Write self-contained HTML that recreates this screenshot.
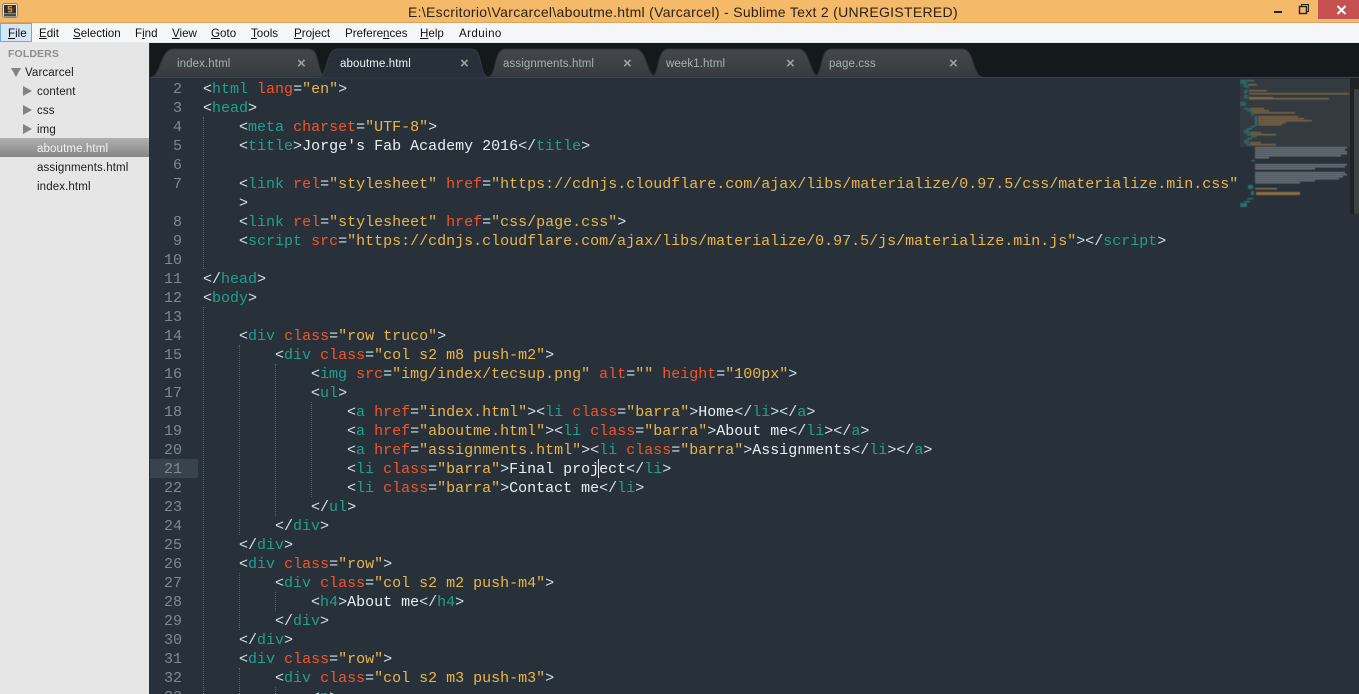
<!DOCTYPE html>
<html lang="en"><head><meta charset="utf-8"><title>Sublime Text</title>
<style>
html,body{margin:0;padding:0;width:1359px;height:694px;overflow:hidden;background:#283139}
body{position:relative;font-family:"Liberation Sans",sans-serif}
.abs{position:absolute;white-space:pre}
#title{position:absolute;left:0;top:0;width:1359px;height:22px;background:#f4b969;border-bottom:1px solid #d9a45c}
#ttext{left:408px;top:3px;font-size:14px;line-height:18px;color:#2a2218;letter-spacing:.3px}
#menu{position:absolute;left:0;top:23px;width:1359px;height:19px;background:#f5f6f7;border-bottom:1px solid #e8e8e8}
#menu span{position:absolute;top:3px;font-size:11.6px;line-height:16px;color:#111;white-space:pre}
#filebox{position:absolute;left:0;top:0;width:30px;height:17px;background:#d5e6f6;border:1px solid #70a9de}
#side{position:absolute;left:0;top:43px;width:149px;height:651px;background:#e6e6e6;border-right:1px solid #2a2f33}
#side .i{position:absolute;font-size:11.5px;line-height:16px;color:#1b1b1b;white-space:pre;letter-spacing:.12px}
#sel{position:absolute;left:0;top:95px;width:149px;height:19px;background:linear-gradient(#b0b0b0,#868686)}
.tri{position:absolute;width:0;height:0;border-top:5px solid transparent;border-bottom:5px solid transparent;border-left:9px solid #838383}
#tabs{position:absolute;left:150px;top:43px;width:1209px;height:35px;background:#14191c}
#ed{position:absolute;left:150px;top:78px;width:1209px;height:616px;background:#283139}
#hl{position:absolute;left:150px;top:459px;width:48px;height:19px;background:#37444c}
#nums{position:absolute;left:150px;top:80px;width:32px;margin:0;font:15px/19px "Liberation Mono",monospace;color:#7e8a8f;text-align:right}
#code{position:absolute;left:203px;top:80px;margin:0;font:15px/19px "Liberation Mono",monospace;letter-spacing:0;color:#e9eff1;height:614px;overflow:hidden}
#code i{font-style:normal;color:#cde2ea}
#code b{font-weight:normal;color:#20a090}
#code u{text-decoration:none;color:#f2552b}
#code s{text-decoration:none;color:#eab64c}
.g{position:absolute;width:0;border-left:1px dotted #566169}
#caret{position:absolute;left:598px;top:459px;width:1px;height:19px;background:#e8eef0}
.tl{position:absolute;font-size:11.5px;line-height:16px;top:56px;white-space:pre;letter-spacing:.1px}
.tx{position:absolute;font-size:15px;line-height:16px;top:56px;font-weight:bold;color:#9ca0a3}
</style></head><body>

<div id="title">
  <svg style="position:absolute;left:2px;top:3px" width="16" height="15" viewBox="0 0 16 15">
    <rect x=".5" y=".5" width="15" height="14" rx="2" fill="#e9e4da" stroke="#8a8378"/>
    <rect x="2" y="2" width="12" height="8.5" fill="#343230"/>
    <rect x="2" y="11" width="12" height="2.5" fill="#4b4945"/>
    <path d="M10 3.6H6.5V6H9.5V8.6H6" fill="none" stroke="#e98a1e" stroke-width="1.4"/>
  </svg>
  <div class="abs" id="ttext">E:\Escritorio\Varcarcel\aboutme.html (Varcarcel) - Sublime Text 2 (UNREGISTERED)</div>
  <div style="position:absolute;left:1274px;top:11px;width:8px;height:2px;background:#222"></div>
  <svg style="position:absolute;left:1298px;top:3px" width="12" height="12" viewBox="0 0 12 12">
    <path d="M3.5 3V1.5H10.5V8.5H8.5" fill="none" stroke="#222" stroke-width="1"/>
    <rect x="1.5" y="3.5" width="7" height="7" fill="none" stroke="#222" stroke-width="1.4"/>
  </svg>
  <div style="position:absolute;left:1318px;top:0;width:41px;height:19px;background:#c75050"></div>
  <svg style="position:absolute;left:1336px;top:5px" width="11" height="10" viewBox="0 0 11 10">
    <path d="M1.5 1L9.5 9M9.5 1L1.5 9" stroke="#fff" stroke-width="2"/>
  </svg>
</div>

<div id="menu">
  <div id="filebox"></div>
  <span style="left:8px"><u>F</u>ile</span>
  <span style="left:39px"><u>E</u>dit</span>
  <span style="left:73px"><u>S</u>election</span>
  <span style="left:135px">F<u>i</u>nd</span>
  <span style="left:172px"><u>V</u>iew</span>
  <span style="left:211px"><u>G</u>oto</span>
  <span style="left:251px"><u>T</u>ools</span>
  <span style="left:294px"><u>P</u>roject</span>
  <span style="left:345px">Prefere<u>n</u>ces</span>
  <span style="left:420px"><u>H</u>elp</span>
  <span style="left:459px;letter-spacing:.4px">Arduino</span>
</div>

<div id="side">
  <div class="i" style="left:8px;top:3px;color:#8d8d8d;font-weight:bold;font-size:10.5px">FOLDERS</div>
  <div style="position:absolute;left:11px;top:25px;width:0;height:0;border-left:5px solid transparent;border-right:5px solid transparent;border-top:9px solid #838383"></div>
  <div class="i" style="left:25px;top:22px">Varcarcel</div>
  <div class="tri" style="left:23px;top:43px"></div>
  <div class="i" style="left:37px;top:41px">content</div>
  <div class="tri" style="left:23px;top:62px"></div>
  <div class="i" style="left:37px;top:60px">css</div>
  <div class="tri" style="left:23px;top:81px"></div>
  <div class="i" style="left:37px;top:79px">img</div>
  <div id="sel"></div>
  <div class="i" style="left:37px;top:98px;color:#f4f4f4">aboutme.html</div>
  <div class="i" style="left:37px;top:117px">assignments.html</div>
  <div class="i" style="left:37px;top:136px">index.html</div>
</div>

<div id="tabs"></div>
<div id="ed"></div>

<svg style="position:absolute;left:150px;top:43px" width="850" height="36" viewBox="150 43 850 36">
  <defs><linearGradient id="tg" x1="0" y1="0" x2="0" y2="1"><stop offset="0" stop-color="#43474b"/><stop offset="1" stop-color="#383c40"/></linearGradient></defs>
  <path d="M151 77C161 76 160 49 173 49H310C321 50 316 76 327 77Z" fill="url(#tg)" stroke="#2a3036"/>
  <path d="M488 77C497 76 493 49 505 49H636C648 50 646 76 657 77Z" fill="url(#tg)" stroke="#2a3036"/>
  <path d="M651 77C660 76 656 49 668 49H799C811 50 809 76 820 77Z" fill="url(#tg)" stroke="#2a3036"/>
  <path d="M814 77C823 76 819 49 831 49H963C975 50 972 76 983 77Z" fill="url(#tg)" stroke="#2a3036"/>
  <path d="M150 77.5H1000" stroke="#3c444b" stroke-width="1"/>
  <path d="M318 78C328 77 325 49 338 49H472C484 50 478 77 490 78Z" fill="#283139" stroke="#323b42"/>
</svg>
<div style="position:absolute;left:1000px;top:77px;width:359px;height:1px;background:#3c444b"></div>

<div class="tl" style="left:177px;color:#aab0b4">index.html</div><div class="tx" style="left:297px">×</div>
<div class="tl" style="left:340px;color:#f2f5f6">aboutme.html</div><div class="tx" style="left:460px">×</div>
<div class="tl" style="left:503px;color:#aab0b4">assignments.html</div><div class="tx" style="left:623px">×</div>
<div class="tl" style="left:666px;color:#aab0b4">week1.html</div><div class="tx" style="left:786px">×</div>
<div class="tl" style="left:829px;color:#aab0b4">page.css</div><div class="tx" style="left:949px">×</div>

<div id="hl"></div>

<div class="g" style="left:203px;top:117px;height:152px"></div>
<div class="g" style="left:203px;top:307px;height:387px"></div>
<div class="g" style="left:239px;top:345px;height:190px"></div>
<div class="g" style="left:239px;top:573px;height:57px"></div>
<div class="g" style="left:239px;top:668px;height:26px"></div>
<div class="g" style="left:275px;top:364px;height:152px"></div>
<div class="g" style="left:275px;top:592px;height:19px"></div>
<div class="g" style="left:275px;top:687px;height:7px"></div>
<div class="g" style="left:311px;top:402px;height:95px"></div>

<pre id="nums">2
3
4
5
6
7

8
9
10
11
12
13
14
15
16
17
18
19
20
21
22
23
24
25
26
27
28
29
30
31
32
33</pre>

<pre id="code"><i>&lt;</i><b>html</b> <u>lang</u><i>=</i><s>"en"</s><i>&gt;</i>
<i>&lt;</i><b>head</b><i>&gt;</i>
    <i>&lt;</i><b>meta</b> <u>charset</u><i>=</i><s>"UTF-8"</s><i>&gt;</i>
    <i>&lt;</i><b>title</b><i>&gt;</i>Jorge's Fab Academy 2016<i>&lt;/</i><b>title</b><i>&gt;</i>

    <i>&lt;</i><b>link</b> <u>rel</u><i>=</i><s>"stylesheet"</s> <u>href</u><i>=</i><s>"https://cdnjs.cloudflare.com/ajax/libs/materialize/0.97.5/css/materialize.min.css"</s>
    <i>&gt;</i>
    <i>&lt;</i><b>link</b> <u>rel</u><i>=</i><s>"stylesheet"</s> <u>href</u><i>=</i><s>"css/page.css"</s><i>&gt;</i>
    <i>&lt;</i><b>script</b> <u>src</u><i>=</i><s>"https://cdnjs.cloudflare.com/ajax/libs/materialize/0.97.5/js/materialize.min.js"</s><i>&gt;&lt;/</i><b>script</b><i>&gt;</i>

<i>&lt;/</i><b>head</b><i>&gt;</i>
<i>&lt;</i><b>body</b><i>&gt;</i>

    <i>&lt;</i><b>div</b> <u>class</u><i>=</i><s>"row truco"</s><i>&gt;</i>
        <i>&lt;</i><b>div</b> <u>class</u><i>=</i><s>"col s2 m8 push-m2"</s><i>&gt;</i>
            <i>&lt;</i><b>img</b> <u>src</u><i>=</i><s>"img/index/tecsup.png"</s> <u>alt</u><i>=</i><s>""</s> <u>height</u><i>=</i><s>"100px"</s><i>&gt;</i>
            <i>&lt;</i><b>ul</b><i>&gt;</i>
                <i>&lt;</i><b>a</b> <u>href</u><i>=</i><s>"index.html"</s><i>&gt;&lt;</i><b>li</b> <u>class</u><i>=</i><s>"barra"</s><i>&gt;</i>Home<i>&lt;/</i><b>li</b><i>&gt;&lt;/</i><b>a</b><i>&gt;</i>
                <i>&lt;</i><b>a</b> <u>href</u><i>=</i><s>"aboutme.html"</s><i>&gt;&lt;</i><b>li</b> <u>class</u><i>=</i><s>"barra"</s><i>&gt;</i>About me<i>&lt;/</i><b>li</b><i>&gt;&lt;/</i><b>a</b><i>&gt;</i>
                <i>&lt;</i><b>a</b> <u>href</u><i>=</i><s>"assignments.html"</s><i>&gt;&lt;</i><b>li</b> <u>class</u><i>=</i><s>"barra"</s><i>&gt;</i>Assignments<i>&lt;/</i><b>li</b><i>&gt;&lt;/</i><b>a</b><i>&gt;</i>
                <i>&lt;</i><b>li</b> <u>class</u><i>=</i><s>"barra"</s><i>&gt;</i>Final project<i>&lt;/</i><b>li</b><i>&gt;</i>
                <i>&lt;</i><b>li</b> <u>class</u><i>=</i><s>"barra"</s><i>&gt;</i>Contact me<i>&lt;/</i><b>li</b><i>&gt;</i>
            <i>&lt;/</i><b>ul</b><i>&gt;</i>
        <i>&lt;/</i><b>div</b><i>&gt;</i>
    <i>&lt;/</i><b>div</b><i>&gt;</i>
    <i>&lt;</i><b>div</b> <u>class</u><i>=</i><s>"row"</s><i>&gt;</i>
        <i>&lt;</i><b>div</b> <u>class</u><i>=</i><s>"col s2 m2 push-m4"</s><i>&gt;</i>
            <i>&lt;</i><b>h4</b><i>&gt;</i>About me<i>&lt;/</i><b>h4</b><i>&gt;</i>
        <i>&lt;/</i><b>div</b><i>&gt;</i>
    <i>&lt;/</i><b>div</b><i>&gt;</i>
    <i>&lt;</i><b>div</b> <u>class</u><i>=</i><s>"row"</s><i>&gt;</i>
        <i>&lt;</i><b>div</b> <u>class</u><i>=</i><s>"col s2 m3 push-m3"</s><i>&gt;</i>
            <i>&lt;</i><b>p</b><i>&gt;</i></pre>

<div id="caret"></div>

<svg style="position:absolute;left:1240px;top:78px" width="119" height="136" viewBox="1240 78 119 136">
  <defs><filter id="bl" x="-5%" y="-5%" width="110%" height="110%"><feGaussianBlur stdDeviation="0.45"/></filter></defs>
  <rect x="1240" y="79" width="110" height="68" fill="#333b41"/>
  <rect x="1350" y="78" width="9" height="136" fill="#1f2326"/>
  <rect x="1354" y="89" width="5" height="125" rx="2" fill="#3d4245"/>
  <g filter="url(#bl)" opacity=".85">
  <g fill="#2c7e78">
    <rect x="1240" y="80" width="14" height="1.4"/><rect x="1240" y="82" width="7" height="1.4"/><rect x="1243" y="84" width="4" height="1.4"/>
    <rect x="1244" y="86" width="5" height="1.4"/><rect x="1244" y="90" width="4" height="1.4"/><rect x="1244" y="92" width="3" height="1.4"/><rect x="1244" y="95" width="4" height="1.4"/><rect x="1244" y="97" width="4" height="1.4"/>
    <rect x="1240" y="102" width="6" height="1.4"/><rect x="1240" y="104" width="6" height="1.4"/><rect x="1244" y="108" width="5" height="1.4"/><rect x="1247" y="110" width="5" height="1.4"/><rect x="1251" y="112" width="4" height="1.4"/><rect x="1251" y="114" width="3" height="1.4"/>
    <rect x="1255" y="116" width="2" height="10"/><rect x="1251" y="126" width="4" height="1.4"/><rect x="1247" y="128" width="5" height="1.4"/><rect x="1244" y="130" width="5" height="1.4"/><rect x="1244" y="132" width="5" height="1.4"/><rect x="1247" y="134" width="5" height="1.4"/><rect x="1251" y="136" width="6" height="1.4"/><rect x="1247" y="138" width="5" height="1.4"/><rect x="1244" y="140" width="5" height="1.4"/><rect x="1244" y="142" width="5" height="1.4"/><rect x="1247" y="144" width="5" height="1.4"/>
    <rect x="1251" y="160" width="4" height="1.4"/><rect x="1248" y="185" width="5" height="4"/><rect x="1251" y="191" width="3" height="4"/><rect x="1247" y="198" width="6" height="1.4"/><rect x="1244" y="201" width="6" height="1.4"/><rect x="1240" y="203" width="7" height="4"/>
  </g>
  <g fill="#8f7046">
    <rect x="1248" y="84" width="9" height="1.4"/><rect x="1249" y="90" width="18" height="1.4"/><rect x="1249" y="93" width="100" height="1.4"/><rect x="1249" y="97" width="24" height="1.4"/><rect x="1249" y="98" width="80" height="1.4"/>
    <rect x="1250" y="108" width="14" height="1.4"/><rect x="1252" y="110" width="17" height="1.4"/><rect x="1255" y="112" width="40" height="1.4"/>
    <rect x="1258" y="116" width="40" height="1.4"/><rect x="1258" y="118" width="46" height="1.4"/><rect x="1258" y="120" width="54" height="1.4"/><rect x="1258" y="122" width="28" height="1.4"/><rect x="1258" y="124" width="24" height="1.4"/>
    <rect x="1250" y="132" width="11" height="1.4"/><rect x="1252" y="134" width="24" height="1.4"/><rect x="1250" y="142" width="11" height="1.4"/><rect x="1252" y="144" width="24" height="1.4"/>
  </g>
  <g fill="#7d878b">
    <rect x="1255" y="147" width="92" height="1.4"/><rect x="1255" y="149" width="90" height="1.4"/><rect x="1255" y="151" width="92" height="1.4"/><rect x="1255" y="153" width="92" height="1.4"/><rect x="1255" y="155" width="86" height="1.4"/><rect x="1255" y="157" width="14" height="1.4"/>
    <rect x="1255" y="164" width="92" height="1.4"/><rect x="1255" y="166" width="90" height="1.4"/><rect x="1255" y="168" width="60" height="1.4"/>
    <rect x="1255" y="172" width="90" height="1.4"/><rect x="1255" y="174" width="92" height="1.4"/><rect x="1255" y="176" width="88" height="1.4"/><rect x="1255" y="178" width="84" height="1.4"/><rect x="1255" y="180" width="60" height="1.4"/><rect x="1255" y="182" width="45" height="1.4"/>
  </g>
  <g fill="#a67c45">
    <rect x="1255" y="188" width="22" height="1.4"/><rect x="1256" y="192" width="44" height="3"/>
  </g>
  </g>
</svg>

</body></html>
